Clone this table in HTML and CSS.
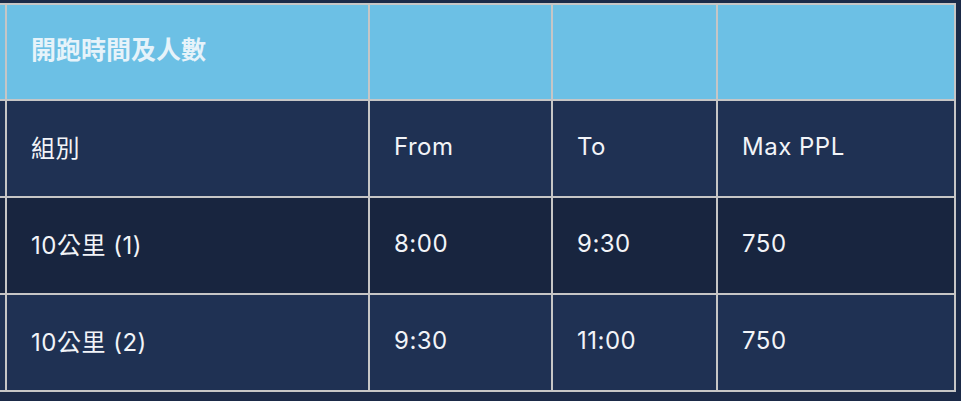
FILE: index.html
```html
<!DOCTYPE html>
<html lang="zh-Hant">
<head>
<meta charset="utf-8">
<title>開跑時間及人數</title>
<link rel="stylesheet" href="styles.css">
</head>
<body>
<div class="frame">
  <table class="schedule">
    <tbody>
      <tr class="row-head">
        <td class="c0"></td>
        <td class="c1 title">開跑時間及人數</td>
        <td class="c2"></td>
        <td class="c3"></td>
        <td class="c4"></td>
      </tr>
      <tr class="row-labels">
        <td></td>
        <td>組別</td>
        <td>From</td>
        <td>To</td>
        <td>Max PPL</td>
      </tr>
      <tr class="row-dark">
        <td></td>
        <td>10公里 (1)</td>
        <td>8:00</td>
        <td>9:30</td>
        <td>750</td>
      </tr>
      <tr class="row-mid">
        <td></td>
        <td>10公里 (2)</td>
        <td>9:30</td>
        <td>11:00</td>
        <td>750</td>
      </tr>
    </tbody>
  </table>
</div>
</body>
</html>
```

FILE: styles.css
```css
html, body {
  margin: 0;
  padding: 0;
}
body {
  background: #1b2a48;
  overflow: hidden;
  font-family: "Inter", "Noto Sans CJK TC", sans-serif;
}
.frame {
  width: 961px;
  height: 401px;
  overflow: hidden;
  padding-top: 3px;
  box-sizing: border-box;
}
.schedule {
  margin-left: -97px;
  width: 1053px;
  table-layout: fixed;
  border-collapse: separate;
  border-spacing: 2px;
  background: #c6c6c6;
  color: #f2f4f8;
  font-size: 24px;
  letter-spacing: 0.5px;
}
.schedule td {
  box-sizing: border-box;
  padding: 0 24px 4px;
  vertical-align: middle;
  height: 95px;
  white-space: nowrap;
}
.c0 { width: 100px; }
.c1 { width: 361px; }
.c2 { width: 181px; }
.c3 { width: 163px; }
.c4 { width: 236px; }

.row-head td {
  background: #6cc0e5;
  height: 94px;
  padding-bottom: 9px;
}
.title {
  font-weight: 700;
  color: #e6f3fa;
  font-size: 25px;
  letter-spacing: 0;
}
.row-labels td { background: #1f3153; }
.row-dark td { background: #18253f; }
.row-mid td { background: #1f3153; }
```
